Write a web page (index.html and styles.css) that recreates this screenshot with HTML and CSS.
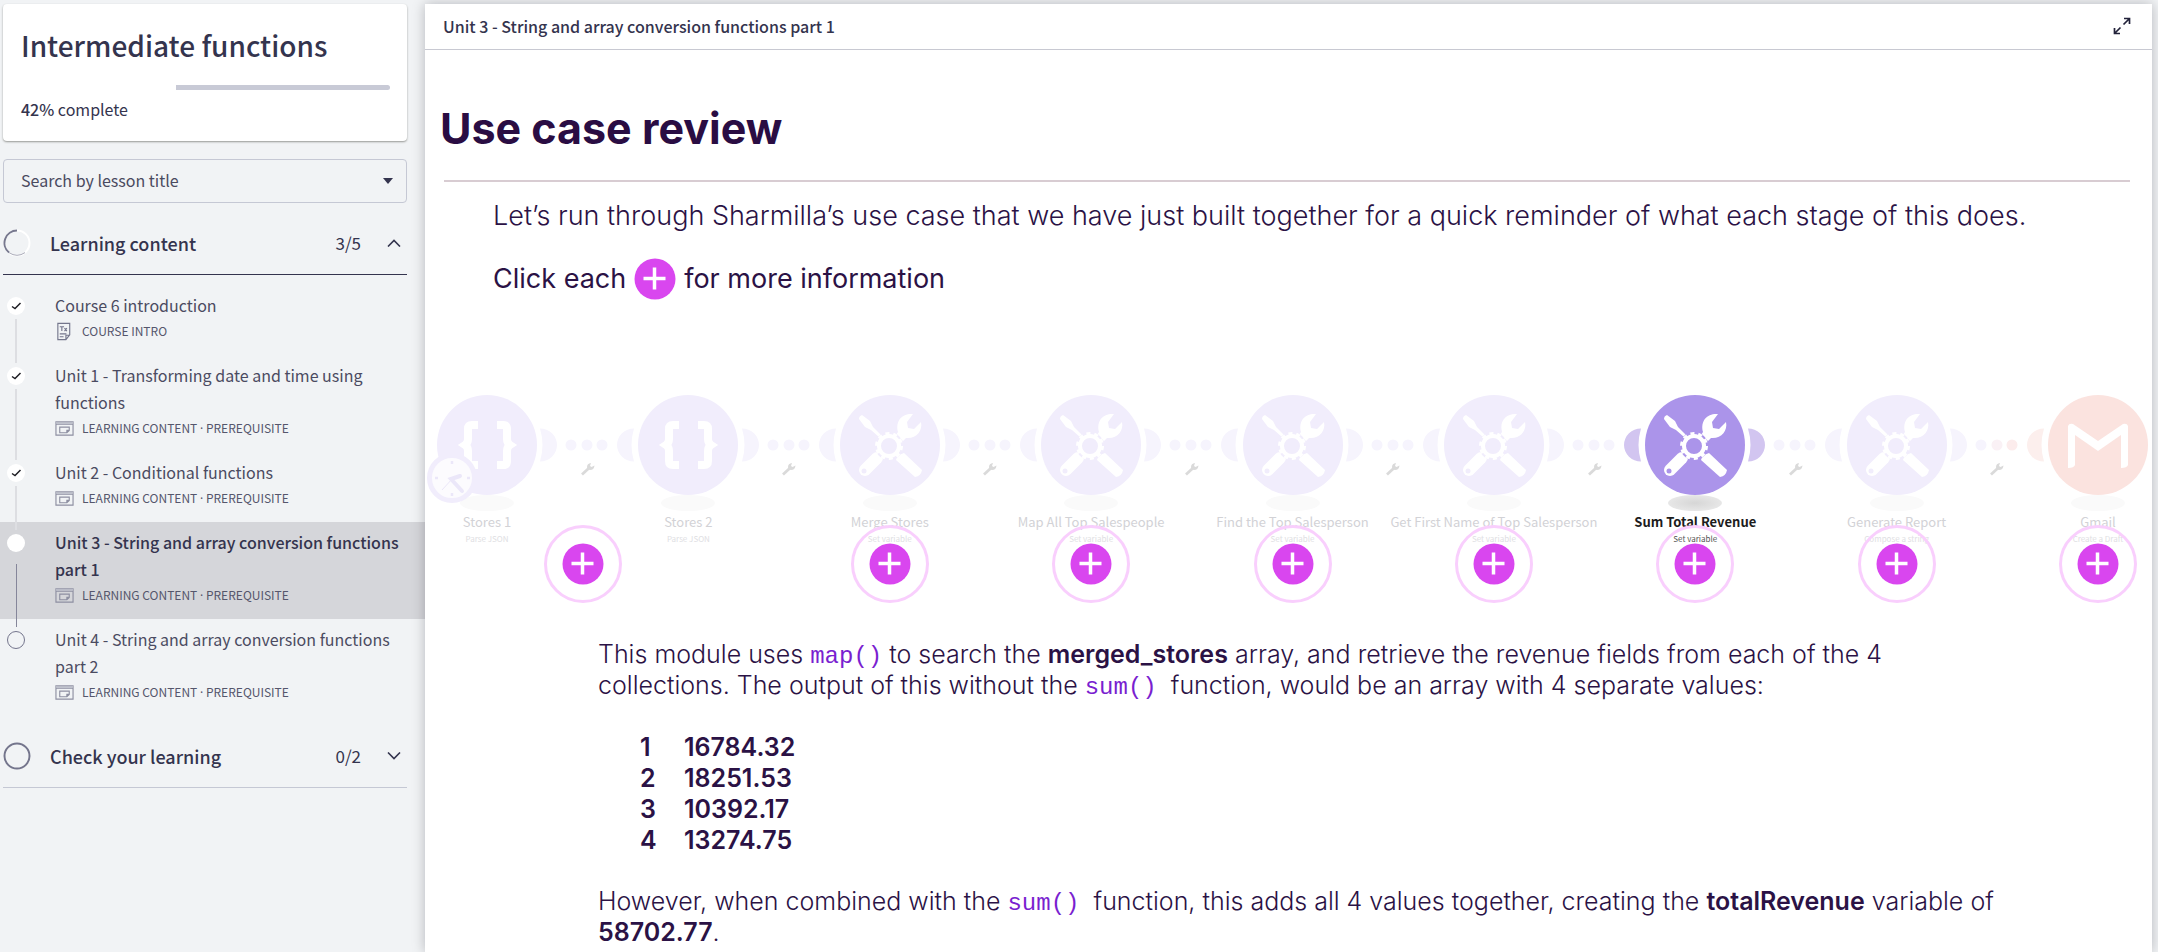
FILE: index.html
```html
<!DOCTYPE html>
<html lang="en">
<head>
<meta charset="utf-8">
<title>Intermediate functions</title>
<link rel="stylesheet" href="styles.css">
</head>
<body>
<svg class="defs" aria-hidden="true">
  <symbol id="check" viewBox="0 0 18 18"><path d="M5 9.500 8 11.500l5.500-5.500" fill="none" stroke="#1e1e24" stroke-width="1.500"/></symbol>
  <symbol id="lesson" viewBox="0 0 20 16"><path d="M1 1h18v14H1zM1 3.500h18M5 6.500h10v3.500l-2.500 2.500H5zM15 10h-2.500v2.500" fill="none" stroke="#8d8fa1" stroke-width="1.200"/><path d="M1 1h18v2H1z" fill="#b9bbc7"/></symbol>
  <symbol id="plus" viewBox="0 0 42 42"><circle cx="21" cy="21" r="20.500" fill="#d946ef"/><path d="M20.500 9.500v22M9.500 20.500h22" stroke="#fff" stroke-width="3.500"/></symbol>
  <symbol id="braces" viewBox="0 0 100 100"><circle cx="50" cy="50" r="50" fill="currentColor"/><path d="M41 30H35Q31 30 31 34V44Q31 48 28 50Q31 52 31 56V66Q31 70 35 70H41M60 30H66Q70 30 70 34V44Q70 48 73 50Q70 52 70 56V66Q70 70 66 70H60" fill="none" stroke="#fff" stroke-width="8"/></symbol>
  <symbol id="tools" viewBox="0 0 100 100">
    <circle cx="50" cy="50" r="50" fill="currentColor"/>
    <path d="M19 24Q19 21 22 20L30 26L33 32L41 40L39 42L31 35L25 32Z" fill="#fff"/>
    <path d="M73 19L67 27L68 33L74 34L81 27C83 36 76 44 66 43L63 46L56 40L58 37C55 25 63 18 73 19Z" fill="#fff"/>
    <path d="M37 63 25 75" stroke="#fff" stroke-width="12" stroke-linecap="round"/>
    <circle cx="24" cy="76" r="2.500" fill="currentColor"/>
    <path d="M64 58 82 75Q81 81 75 82L56 65Q57 60 64 58Z" fill="#fff"/>
    <circle cx="49" cy="51" r="14" fill="currentColor"/>
    <circle cx="49" cy="51" r="10" fill="none" stroke="#fff" stroke-width="4"/>
    <circle cx="49" cy="51" r="12.500" fill="none" stroke="#fff" stroke-width="3" stroke-dasharray="4 3.854"/>
  </symbol>
  <symbol id="mail" viewBox="0 0 100 100"><circle cx="50" cy="50" r="50" fill="currentColor"/><path d="M20 31Q21 28 25 29L50 46 75 29Q79 28 80 31V70Q79 73 73 73V40L50 56 27 40V70Q26 73 20 73Z" fill="#fff"/></symbol>
  <symbol id="link" viewBox="0 0 101 60">
    <path class="moon-a" d="M3 13.500a17 16.500 0 0 1 0 33Q8 30 3 13.500Z"/>
    <circle class="dot-a" cx="34" cy="30" r="5.500"/><circle class="dot-b" cx="50" cy="30" r="5.500"/><circle class="dot-c" cx="65" cy="30" r="5.500"/>
    <path class="moon-b" d="M97 13.500a17 16.500 0 0 0 0 33Q92 30 97 13.500Z"/>
  </symbol>
  <symbol id="wrench" viewBox="0 0 14 14"><path d="M1 12.500 7.500 6.500" stroke="#dadada" stroke-width="2.800"/><path d="M10 1 9 4l1.500 1L13.500 3.500Q13 8 9 8L6.500 7.500 6 5Q6 1.500 10 1Z" fill="#dadada"/></symbol>
</svg>

<div class="page">
  <aside class="sidebar">
    <section class="card">
      <h1 class="course-title">Intermediate functions</h1>
      <div class="progress" role="progressbar" aria-label="Course progress" aria-valuenow="42" aria-valuemin="0" aria-valuemax="100"><span class="progress-left"></span></div>
      <p class="complete"><b>42%</b> complete</p>
    </section>

    <div class="search">
      <select class="search-select" aria-label="Search by lesson title"><option>Search by lesson title</option></select>
      <svg class="caret" viewBox="0 0 10 6"><path d="M0 0h10L5 6z" fill="#34344e"/></svg>
    </div>

    <button class="section section-open" type="button">
      <svg class="ring" viewBox="0 0 28 28"><circle cx="14" cy="14" r="12.500" fill="none" stroke="#fff" stroke-width="2"/><path d="M14 1.500A12.500 12.500 0 0 0 6 23.600" fill="none" stroke="#77788e" stroke-width="2"/><path d="M6 23.600Q14 29 22 23.600" fill="none" stroke="#a9aab8"/></svg>
      <span class="section-name">Learning content</span><span class="count">3/5</span>
      <svg class="chevron" viewBox="0 0 14 8"><path d="M1 7.500 7 1.500 13 7.500" fill="none" stroke="#34344e" stroke-width="1.600"/></svg>
    </button>

    <ul class="lessons">
      <li class="lesson">
        <div class="track"><svg class="status done"><use href="#check"/></svg><span class="line"></span></div>
        <div class="info"><a class="name" href="#">Course 6 introduction</a>
          <span class="meta"><svg class="kind" viewBox="0 0 20 20"><path d="M3 1.500h12.500v12l-4 5H3zM15.500 14h-4v4M5 12.500h7M5 15.500h4M5 5h4.500M7.200 5v4.500M10 6.500l2.500 3M12.500 6.500l-2.500 3" fill="none" stroke="#74768c" stroke-width="1.200"/></svg>COURSE INTRO</span></div>
      </li>
      <li class="lesson">
        <div class="track"><svg class="status done"><use href="#check"/></svg><span class="line"></span></div>
        <div class="info"><a class="name" href="#">Unit 1 - Transforming date and time using functions</a>
          <span class="meta"><svg class="kind"><use href="#lesson"/></svg><span>LEARNING CONTENT <span class="sep">·</span> PREREQUISITE</span></span></div>
      </li>
      <li class="lesson">
        <div class="track"><svg class="status done"><use href="#check"/></svg><span class="line"></span></div>
        <div class="info"><a class="name" href="#">Unit 2 - Conditional functions</a>
          <span class="meta"><svg class="kind"><use href="#lesson"/></svg><span>LEARNING CONTENT <span class="sep">·</span> PREREQUISITE</span></span></div>
      </li>
      <li class="lesson current">
        <div class="track"><span class="status done"></span><span class="line line-dark"></span></div>
        <div class="info"><a class="name" href="#" aria-current="page">Unit 3 - String and array conversion functions part 1</a>
          <span class="meta"><svg class="kind"><use href="#lesson"/></svg><span>LEARNING CONTENT <span class="sep">·</span> PREREQUISITE</span></span></div>
      </li>
      <li class="lesson">
        <div class="track"><span class="status todo"></span></div>
        <div class="info"><a class="name" href="#">Unit 4 - String and array conversion functions part 2</a>
          <span class="meta"><svg class="kind"><use href="#lesson"/></svg><span>LEARNING CONTENT <span class="sep">·</span> PREREQUISITE</span></span></div>
      </li>
    </ul>

    <button class="section" type="button">
      <svg class="ring" viewBox="0 0 28 28"><circle cx="14" cy="14" r="12.500" fill="none" stroke="#74758c" stroke-width="2"/></svg>
      <span class="section-name">Check your learning</span><span class="count">0/2</span>
      <svg class="chevron" viewBox="0 0 14 8"><path d="M1 .5 7 6.500 13 .5" fill="none" stroke="#34344e" stroke-width="1.600"/></svg>
    </button>
  </aside>

  <main class="panel">
    <header class="bar">
      <h2 class="bar-title">Unit 3 - String and array conversion functions part 1</h2>
      <button class="expand" type="button" aria-label="Full screen"><svg class="expand-icon" viewBox="0 0 18 18"><path d="M10.500 7.500 16.500 1.500M11 1.500h5.500v5.500M7.500 10.500 1.500 16.500M1.500 11v5.500h5.500" fill="none" stroke="#22223a" stroke-width="1.700"/></svg></button>
    </header>

    <h1 class="heading">Use case review</h1>
    <hr class="rule">
    <div class="intro">
      <p class="lead">Let’s run through Sharmilla’s use case that we have just built together for a quick reminder of what each stage of this does.</p>
      <p class="hint">Click each <svg class="plus"><use href="#plus"/></svg> for more information</p>
    </div>

    <div class="flow">
      <div class="node"><svg class="disc"><use href="#braces"/></svg><span class="shadow"></span><span class="label">Stores 1</span><span class="sub">Parse JSON</span>
        <svg class="clock" viewBox="0 0 50 50"><circle cx="25" cy="25" r="22.500" fill="#fcfbfe" stroke="#f1edfc" stroke-width="5"/><path d="M33 23 24 26 35 38" fill="none" stroke="#ebe7f9" stroke-width="4" stroke-linecap="round"/><path d="M26 25 15 37" stroke="#ebe7f9"/><path d="M25 8v3M25 40v3M8 25h3M40 25h3" stroke="#ebe7f9" stroke-width="2.500"/></svg></div>
      <div class="link"><svg class="bridge"><use href="#link"/></svg><svg class="wrench"><use href="#wrench"/></svg><button class="more more-first" type="button" aria-label="Stores details"><svg class="plus"><use href="#plus"/></svg></button></div>
      <div class="node"><svg class="disc"><use href="#braces"/></svg><span class="shadow"></span><span class="label">Stores 2</span><span class="sub">Parse JSON</span></div>
      <div class="link"><svg class="bridge"><use href="#link"/></svg><svg class="wrench"><use href="#wrench"/></svg></div>
      <div class="node"><svg class="disc"><use href="#tools"/></svg><span class="shadow"></span><span class="label">Merge Stores</span><span class="sub">Set variable</span><button class="more" type="button" aria-label="Merge Stores details"><svg class="plus"><use href="#plus"/></svg></button></div>
      <div class="link"><svg class="bridge"><use href="#link"/></svg><svg class="wrench"><use href="#wrench"/></svg></div>
      <div class="node"><svg class="disc"><use href="#tools"/></svg><span class="shadow"></span><span class="label">Map All Top Salespeople</span><span class="sub">Set variable</span><button class="more" type="button" aria-label="Map All Top Salespeople details"><svg class="plus"><use href="#plus"/></svg></button></div>
      <div class="link"><svg class="bridge"><use href="#link"/></svg><svg class="wrench"><use href="#wrench"/></svg></div>
      <div class="node"><svg class="disc"><use href="#tools"/></svg><span class="shadow"></span><span class="label">Find the Top Salesperson</span><span class="sub">Set variable</span><button class="more" type="button" aria-label="Find the Top Salesperson details"><svg class="plus"><use href="#plus"/></svg></button></div>
      <div class="link"><svg class="bridge"><use href="#link"/></svg><svg class="wrench"><use href="#wrench"/></svg></div>
      <div class="node"><svg class="disc"><use href="#tools"/></svg><span class="shadow"></span><span class="label">Get First Name of Top Salesperson</span><span class="sub">Set variable</span><button class="more" type="button" aria-label="Get First Name details"><svg class="plus"><use href="#plus"/></svg></button></div>
      <div class="link link-to-active"><svg class="bridge"><use href="#link"/></svg><svg class="wrench"><use href="#wrench"/></svg></div>
      <div class="node active"><svg class="disc"><use href="#tools"/></svg><span class="shadow"></span><span class="label">Sum Total Revenue</span><span class="sub">Set variable</span><button class="more" type="button" aria-label="Sum Total Revenue details"><svg class="plus"><use href="#plus"/></svg></button></div>
      <div class="link link-from-active"><svg class="bridge"><use href="#link"/></svg><svg class="wrench"><use href="#wrench"/></svg></div>
      <div class="node"><svg class="disc"><use href="#tools"/></svg><span class="shadow"></span><span class="label">Generate Report</span><span class="sub">Compose a string</span><button class="more" type="button" aria-label="Generate Report details"><svg class="plus"><use href="#plus"/></svg></button></div>
      <div class="link link-to-mail"><svg class="bridge"><use href="#link"/></svg><svg class="wrench"><use href="#wrench"/></svg></div>
      <div class="node mail"><svg class="disc"><use href="#mail"/></svg><span class="shadow"></span><span class="label">Gmail</span><span class="sub">Create a Draft</span><button class="more" type="button" aria-label="Gmail details"><svg class="plus"><use href="#plus"/></svg></button></div>
    </div>

    <div class="detail">
      <p>This module uses <code>map()</code> to search the <b>merged_stores</b> array, and retrieve the revenue fields from each of the 4 collections. The output of this without the <code>sum()</code>&nbsp; function, would be an array with 4 separate values:</p>
      <table class="values">
        <tr><td>1</td><td>16784.32</td></tr>
        <tr><td>2</td><td>18251.53</td></tr>
        <tr><td>3</td><td>10392.17</td></tr>
        <tr><td>4</td><td>13274.75</td></tr>
      </table>
      <p>However, when combined with the <code>sum()</code>&nbsp; function, this adds all 4 values together, creating the <b>totalRevenue</b> variable of <b>58702.77</b>.</p>
    </div>
  </main>
</div>
</body>
</html>
```
FILE: styles.css
```css
* { box-sizing: border-box; }
body, h1, h2, p, ul { margin: 0; padding: 0; }
body { background: #f1f3f5; color: #34344e; font-family: "Noto Sans CJK SC", "Noto Sans", sans-serif; }
button { border: 0; background: none; padding: 0; font: inherit; color: inherit; cursor: pointer; }
svg { display: block; flex: none; }
.defs { position: absolute; width: 0; height: 0; }

.page { display: flex; min-height: 100vh; padding: 4px 6px 0 0; overflow: hidden; }

/* sidebar */
.sidebar { width: 425px; flex: none; }
.card { margin: 0 18px 0 3px; padding: 23px 17px 20px 18px; background: #fff; border-radius: 4px; box-shadow: 0 1px 2px rgba(40, 40, 30, .45); }
.course-title { font-size: 28px; line-height: 36px; font-weight: 500; }
.progress { display: flex; justify-content: flex-end; margin-top: 22px; }
.progress-left { width: 58%; height: 5px; border-radius: 0 3px 3px 0; background: #c8cad6; }
.complete { margin-top: 7px; font-size: 16px; line-height: 24px; }
.complete b { font-weight: 500; }

.search { position: relative; margin: 18px 18px 0 3px; }
.search-select { width: 100%; height: 44px; padding: 0 17px 2px; appearance: none; border: 1px solid #c5c8d4; border-radius: 4px; background: none; font: 400 16px "Noto Sans CJK SC", sans-serif; color: #4a4a60; }
.caret { position: absolute; right: 14px; top: 19px; width: 10px; height: 6px; }

.section { display: flex; align-items: center; width: 404px; height: 63px; margin: 9px 18px 0 3px; padding-bottom: 1px; border-bottom: 1px solid #c5c8d4; text-align: left; }
.section-open { border-color: #34344e; }
.ring { width: 28px; height: 28px; }
.section-name { flex: 1; padding-left: 19px; font-size: 18px; font-weight: 500; }
.count { font-size: 17px; }
.chevron { width: 14px; height: 8px; margin: 0 6px 0 26px; }

.lessons { list-style: none; margin-top: 10px; }
.lesson { display: flex; }
.current { background: #d5d6da; }
.track { display: flex; flex-direction: column; align-items: center; gap: 4px; width: 32px; padding-top: 12px; margin-bottom: -8px; position: relative; }
.status { width: 18px; height: 18px; flex: none; border-radius: 9px; }
.done { background: #fff; }
.todo { border: 1px solid #74758c; }
.line { flex: 1; width: 2px; background: #dddee2; }
.line-dark { background: #85869a; width: 1px; margin-top: 8px; }
.info { flex: 1; padding: 7px 16px 12px 23px; display: flex; flex-direction: column; }
.name { color: #4b4b61; font-size: 16px; line-height: 27px; text-decoration: none; }
.current .name { color: #34344e; font-weight: 500; }
.meta { display: flex; align-items: center; gap: 8px; height: 24px; font-size: 12px; line-height: 24px; color: #55566c; }
.sep { font-family: "Noto Sans", sans-serif; line-height: 12px; }
.kind { width: 19px; height: 19px; }

/* content panel */
.panel { flex: 1; min-width: 0; background: #fff; box-shadow: 0 0 12px rgba(0, 0, 20, .25); font-family: Inter, sans-serif; color: #2b1245; }
.bar { display: flex; align-items: center; justify-content: space-between; height: 46px; padding: 0 21px 2px 18px; border-bottom: 1px solid #c8c9d2; }
.bar-title { font: 500 16px/24px "Noto Sans CJK SC", sans-serif; color: #34344e; }
.expand-icon { width: 18px; height: 18px; }
.heading { margin: 48px 0 0 15px; font-size: 43px; line-height: 60px; font-weight: 700; color: #2a0d43; }
.rule { height: 2px; margin: 22px 22px 0 19px; border: 0; background: #d8ccd2; }
.intro { padding: 18px 68px 0; }
.lead { font-size: 27px; line-height: 32px; font-weight: 300; }
.hint { display: flex; align-items: center; gap: 8px; margin-top: 26px; font-size: 27px; line-height: 42px; }
.plus { width: 42px; height: 42px; }

.flow { display: flex; margin: 95px 4px 0 12px; height: 210px; color: #f1edfc; font-family: "Noto Sans CJK SC", sans-serif; }
.node { position: relative; width: 100px; flex: none; display: flex; flex-direction: column; align-items: center; white-space: nowrap; }
.disc { width: 100px; height: 100px; }
.shadow { width: 54px; height: 16px; border-radius: 50%; background: #fafafa; }
.label { margin-top: 1px; font-size: 13px; line-height: 20px; color: #d2d2d6; }
.sub { font-size: 8px; line-height: 14px; color: #e0e0e3; }
.more { position: absolute; top: 130px; left: 11px; display: grid; place-items: center; width: 78px; height: 78px; border: 3px solid #f9cffd; border-radius: 50%; }
.more-first { left: 7px; }
.clock { position: absolute; left: -10px; top: 58px; width: 50px; height: 50px; }
.active { color: #ab94ea; }
.active .shadow { background: radial-gradient(#d6d6d6, #eee); }
.active .label { color: #1c1c1c; font-weight: 700; }
.active .sub { color: #555; }
.mail { color: #fbe3df; }
.link { --a: #f6f4fd; --b: #f6f4fd; --d1: #f6f4fd; --d2: #f6f4fd; position: relative; flex: 1; min-width: 0; display: flex; flex-direction: column; align-items: center; padding-top: 20px; }
.link-to-active { --b: #d2c5f0; }
.link-from-active { --a: #d2c5f0; }
.link-to-mail { --b: #fcefed; --d1: #faf1f5; --d2: #fcecec; }
.bridge { width: 101px; height: 60px; }
.wrench { width: 14px; height: 14px; margin-top: -13px; }
.moon-a { fill: var(--a); }
.moon-b { fill: var(--b); }
.dot-a { fill: #f6f4fd; }
.dot-b { fill: var(--d1); }
.dot-c { fill: var(--d2); }

.detail { padding: 34px 140px 0 173px; font-size: 25px; line-height: 31px; font-weight: 300; }
.detail b { font-weight: 600; }
.detail code { font: 24px/24px "Liberation Mono", monospace; color: #7a1fd0; }
.values { margin: 31px 0 30px 42px; border-spacing: 0; font-weight: 600; }
.values td { padding: 0; }
.values td:first-child { width: 44px; }
```
